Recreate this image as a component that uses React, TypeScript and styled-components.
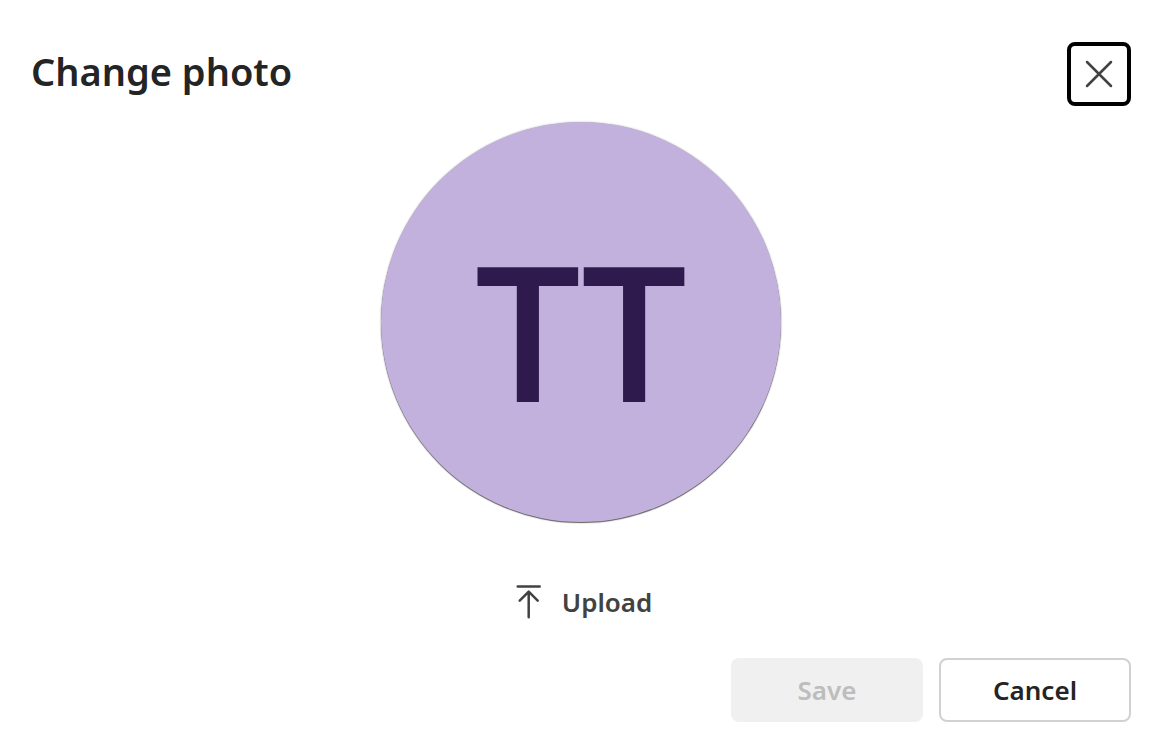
import React from 'react';
import styled, { createGlobalStyle } from 'styled-components';

const GlobalStyle = createGlobalStyle`
  * { box-sizing: border-box; }
  body { margin: 0; background: #fff; color: #242424; font-family: "Noto Sans", "Segoe UI", sans-serif; }
`;

const Dialog = styled.main`
  display: flex;
  flex-direction: column;
  min-height: 100vh;
  padding: 42px 23px 32px 31px;
`;

const Header = styled.header`
  display: flex;
  align-items: flex-start;
  justify-content: space-between;
`;

const Title = styled.h1`
  margin: 0;
  font-size: 38px;
  line-height: 58px;
  font-weight: 600;
`;

const CloseButton = styled.button`
  display: grid;
  place-items: center;
  width: 64px;
  height: 64px;
  padding: 0;
  border: 4px solid #000;
  border-radius: 8px;
  background: #fff;
  color: #424242;
`;

const Body = styled.section`
  display: flex;
  flex-direction: column;
  align-items: center;
  padding-top: 16px;
`;

const Avatar = styled.div`
  display: grid;
  place-items: center;
  width: 400px;
  height: 400px;
  padding-top: 14px;
  border-radius: 50%;
  background: #c2b1dc;
  box-shadow: 0 1px 1px rgba(0, 0, 0, 0.6), 0 0 2px rgba(0, 0, 0, 0.3);
  color: #2e1a4c;
  font-family: "Open Sans", sans-serif;
  font-size: 188px;
  line-height: 256px;
  font-weight: 600;
`;

const UploadButton = styled.button`
  display: flex;
  align-items: center;
  gap: 16px;
  height: 64px;
  margin-top: 48px;
  padding: 0;
  border: 0;
  background: transparent;
  color: #424242;
  font: 600 26px/40px "Noto Sans", sans-serif;
`;

const Footer = styled.footer`
  display: flex;
  justify-content: flex-end;
  gap: 16px;
  margin-top: 24px;
`;

const ActionButton = styled.button`
  width: 192px;
  height: 64px;
  padding: 0;
  border: 2px solid #d1d1d1;
  border-radius: 8px;
  background: #fff;
  color: #242424;
  font: 600 26px/40px "Noto Sans", sans-serif;
  &:disabled { border-color: #f0f0f0; background: #f0f0f0; color: #bdbdbd; }
`;

export default function App() {
  return (
    <>
      <GlobalStyle />
      <Dialog>
        <Header>
          <Title>Change photo</Title>
          <CloseButton type="button" aria-label="Close">
            <svg width="28" height="28" viewBox="0 0 28 28" fill="none" stroke="currentColor" strokeWidth="2.5" strokeLinecap="round">
              <path d="M2 2 26 26M26 2 2 26" />
            </svg>
          </CloseButton>
        </Header>
        <Body>
          <Avatar>TT</Avatar>
          <UploadButton type="button">
            <svg width="36" height="34" viewBox="0 0 36 34" fill="none" stroke="currentColor" strokeWidth="2.5" strokeLinecap="round" strokeLinejoin="round">
              <path d="M7.7 1.6H29.7M18.7 32.2V7M9.7 15.6 18.7 6.6l9 9" />
            </svg>
            Upload
          </UploadButton>
        </Body>
        <Footer>
          <ActionButton type="button" disabled>Save</ActionButton>
          <ActionButton type="button">Cancel</ActionButton>
        </Footer>
      </Dialog>
    </>
  );
}
